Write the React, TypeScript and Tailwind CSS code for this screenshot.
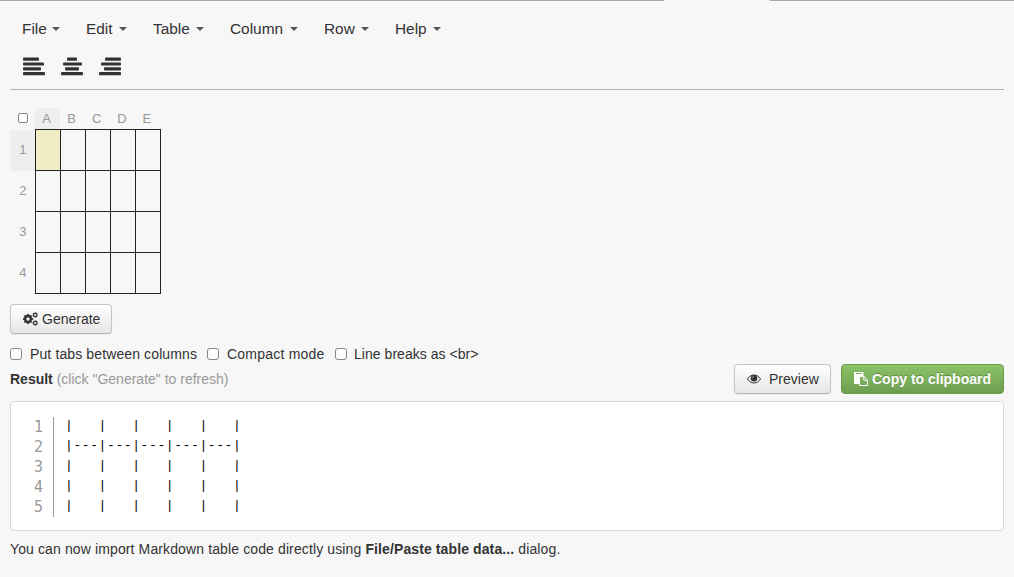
import React from "react";

const menus = [
  { name: "File", w: "w-[64px]", label: "w-[30px]" },
  { name: "Edit", w: "w-[67px]", label: "w-[33px]" },
  { name: "Table", w: "w-[77px]", label: "w-[43px]" },
  { name: "Column", w: "w-[94px]", label: "w-[60px]" },
  { name: "Row", w: "w-[71px]", label: "w-[37px]" },
  { name: "Help", w: "w-[60px]", label: "w-[38px]" },
];

const alignments = [
  [[0, 16], [0, 21], [0, 18], [0, 22]],
  [[6, 10], [2, 19], [4, 14], [0, 22]],
  [[6, 16], [2, 20], [5, 17], [0, 22]],
];

function AlignIcon({ bars }: { bars: number[][] }) {
  return (
    <svg width="22" height="19" viewBox="0 0 22 19" fill="#333">
      {bars.map(([x, w], i) => (
        <rect key={i} x={x} y={0.6 + i * 4.8} width={w} height="3.200" rx="0.8" />
      ))}
    </svg>
  );
}

function Gear({ cx, cy, r, hole }: { cx: number; cy: number; r: number; hole: number }) {
  return (
    <g fill="none" stroke="#333">
      <circle cx={cx} cy={cy} r={(r * 0.8 + hole) / 2} strokeWidth={r * 0.8 - hole} />
      <circle cx={cx} cy={cy} r={r * 0.88} strokeWidth={r * 0.24} pathLength={16} strokeDasharray="1 1" strokeDashoffset="0.5" />
    </g>
  );
}

function GearsIcon() {
  return (
    <svg width="16" height="14" viewBox="0 0 16 14">
      <Gear cx={5} cy={7} r={5.2} hole={1.7} />
      <Gear cx={12.2} cy={3} r={2.9} hole={1.1} />
      <Gear cx={12.2} cy={11} r={2.9} hole={1.1} />
    </svg>
  );
}

function EyeIcon() {
  return (
    <svg width="14" height="10" viewBox="0 0 14 10">
      <path d="M.5 5C2 2.500 4.300 1 7 1s5 1.500 6.500 4C12 7.500 9.700 9 7 9S2 7.500 .5 5z" fill="none" stroke="#333" />
      <circle cx="7" cy="4.300" r="3.300" fill="#333" />
      <path d="M5.300 4.200C5.300 3.200 6 2.600 7 2.500" fill="none" stroke="#eee" strokeWidth=".6" />
    </svg>
  );
}

function PasteIcon() {
  return (
    <svg width="14" height="14" viewBox="0 0 14 14">
      <path d="M.6 0h8.300q.6 0 .6.600V4H5.600Q5 4 5 4.600V12H.6Q0 12 0 11.400V.6Q0 0 .6 0z" fill="#fff" />
      <path d="M2 1.500h5.500" stroke="#7cad5b" />
      <path d="M5.500 4.500h4.600l3.400 3.400v5.600h-8zM9.800 4.500v3.700h3.700" fill="none" stroke="#fff" />
    </svg>
  );
}

function Check() {
  return <input type="checkbox" className="m-0 size-3 shrink-0 appearance-none rounded-[3px] border border-[#858585] bg-white" />;
}

const columns = ["A", "B", "C", "D", "E"];
const rows = [1, 2, 3, 4];
const code = ["|   |   |   |   |   |", "|---|---|---|---|---|", "|   |   |   |   |   |", "|   |   |   |   |   |", "|   |   |   |   |   |"];

export default function App() {
  return (
    <div className="h-[577px] w-[1014px] overflow-hidden bg-[#f7f7f7] font-['Liberation_Sans',Arial,sans-serif] text-[14px] leading-5 text-[#333] antialiased">
      <div className="flex h-px justify-between">
        <div className="w-[664px] bg-[#a6a6a6]" />
        <div className="w-[244px] bg-[#a6a6a6]" />
      </div>
      <div className="px-[10px]">
        <nav className="flex h-[56px] pl-3 text-[15.4px]">
          {menus.map((m) => (
            <button key={m.name} className={`flex h-full items-center whitespace-nowrap ${m.w}`}>
              <span className={`text-left ${m.label}`}>{m.name}</span>
              <svg width="8" height="4" viewBox="0 0 8 4" className="shrink-0"><path d="M0 0h8L4 4z" fill="#555" /></svg>
            </button>
          ))}
        </nav>
        <div className="flex h-[33px] gap-4 border-b border-[#b3b3b3] pl-[13px]">
          {alignments.map((bars, i) => (
            <button key={i} className="flex h-[19px]"><AlignIcon bars={bars} /></button>
          ))}
        </div>
        <table className="mt-[18px] w-[151px] table-fixed border-collapse text-center text-[13px] text-[#999]">
          <thead>
            <tr className="h-[21px]">
              <th className="w-[25px] p-0"><div className="flex justify-center pb-px"><input type="checkbox" className="m-0 size-[10px] appearance-none rounded-[2px] border border-[#858585] bg-white" /></div></th>
              {columns.map((c, i) => <th key={c} className={`w-[25px] p-0 pt-px pr-[2px] font-normal ${i === 0 ? "bg-[#eee]" : ""}`}>{c}</th>)}
            </tr>
          </thead>
          <tbody>
            {rows.map((r) => (
              <tr key={r} className="h-[41px]">
                <td className={`p-0 pl-px ${r === 1 ? "bg-[#eee]" : ""}`}>{r}</td>
                {columns.map((c) => <td key={c} className={`border border-[#222] p-0 ${r === 1 && c === "A" ? "bg-[#f0edc3]" : ""}`} />)}
              </tr>
            ))}
          </tbody>
        </table>
        <button className="mt-[10px] flex h-[30px] w-[102px] items-center gap-[3px] rounded-[4px] border border-[#c5c5c5] border-b-[#b3b3b3] bg-linear-to-b from-white to-[#e6e6e6] pl-3 shadow-[0_1px_2px_rgba(0,0,0,0.05)]">
          <GearsIcon />Generate
        </button>
        <div className="mt-[10px] flex h-5 items-center whitespace-nowrap">
          <label className="flex w-[197px] items-center gap-2 tracking-[0.12px]"><Check />Put tabs between columns</label>
          <label className="flex w-[128px] items-center gap-2 tracking-[0.22px]"><Check />Compact mode</label>
          <label className="flex items-center gap-[7px] tracking-[0.04px]"><Check />Line breaks as &lt;br&gt;</label>
        </div>
        <div className="flex h-[30px] justify-between">
          <div className="pt-[5px]"><b>Result</b> <span className="text-[#999]">(click "Generate" to refresh)</span></div>
          <div className="flex gap-[10px]">
            <button className="flex w-[97px] items-center gap-2 rounded-[4px] border border-[#c5c5c5] border-b-[#b3b3b3] bg-linear-to-b from-white to-[#e6e6e6] pl-3 shadow-[0_1px_2px_rgba(0,0,0,0.05)]">
              <EyeIcon />Preview
            </button>
            <button className="flex w-[163px] items-center gap-1 whitespace-nowrap rounded-[4px] border border-[#6b9a4b] bg-linear-to-b from-[#8bc267] to-[#6d9f50] pl-3 font-bold text-white [text-shadow:0_-1px_0_rgba(0,0,0,0.25)]">
              <PasteIcon />Copy to clipboard
            </button>
          </div>
        </div>
        <div className="mt-[7px] flex h-[130px] rounded-[4px] border border-[#d8d8d8] bg-white pt-[15px]">
          <div className="h-[100px] w-[43px] border-r border-[#999] pr-[10px] text-right font-['DejaVu_Sans_Mono',monospace] text-[15px] text-[#999]">
            {code.map((_, i) => <div key={i} className="h-5 leading-5">{i + 1}</div>)}
          </div>
          <pre className="-mt-px pl-[11px] font-['Liberation_Mono',monospace] text-[13px] leading-5 tracking-[0.6px] text-black">{code.join("\n")}</pre>
        </div>
        <p className="mt-2 tracking-[0.12px]">You can now import Markdown table code directly using <b className="tracking-[0.11px]">File/Paste table data...</b> dialog.</p>
      </div>
    </div>
  );
}
